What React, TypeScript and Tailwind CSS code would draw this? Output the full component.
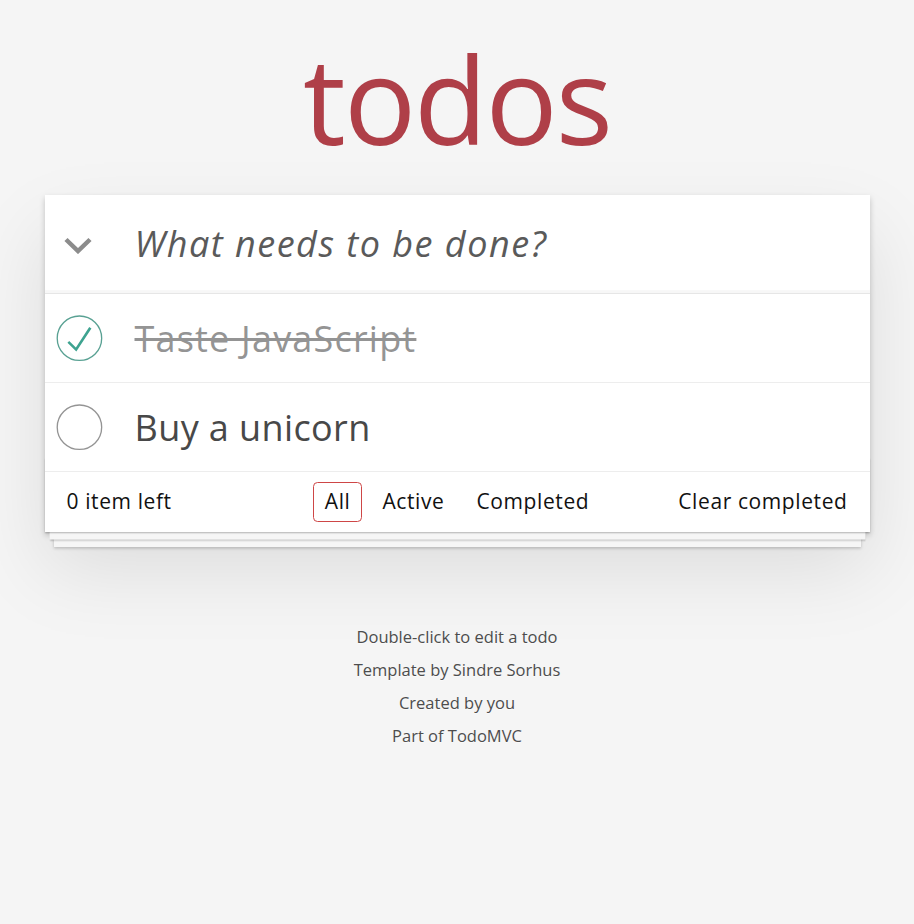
const todos = [
  { id: 1, title: "Taste JavaScript", completed: true },
  { id: 2, title: "Buy a unicorn", completed: false },
];

function Toggle({ checked }: { checked: boolean }) {
  return (
    <svg width="60" height="60" viewBox="-10 -18 100 135" className="shrink-0">
      <circle cx="50" cy="50" r="50" fill="none" stroke={checked ? "#59A193" : "#949494"} strokeWidth="3" />
      {checked ? <path d="M72 25L42 71 27 56l-4 4 20 20 34-52z" fill="#3EA390" /> : null}
    </svg>
  );
}

export default function App() {
  return (
    <div className="min-h-screen bg-[#f5f5f5] font-['Open_Sans',sans-serif] text-[21px] leading-[1.4] text-[#111]">
      <div className="mx-auto w-[825px] pt-[39px]">
        <h1 className="mb-[36px] h-[120px] text-center text-[120px] leading-none font-normal tracking-[-2px] text-[#af3f48]">todos</h1>

        <section className="relative bg-white shadow-[0_3px_6px_0_rgba(0,0,0,0.2),0_37px_75px_0_rgba(0,0,0,0.1)]">
          <header className="flex h-[98px] items-center shadow-[inset_0_-3px_1px_rgba(0,0,0,0.03)]">
            <div className="w-[90px] pl-[19px] pt-[2px]">
              <svg width="28" height="17" viewBox="0 0 28 17">
                <path d="M2 2.5l12 11.5L26 2.5" fill="none" stroke="#8c8c8c" strokeWidth="4.5" />
              </svg>
            </div>
            <span className="text-[36px] leading-[1.4] tracking-[1.5px] italic text-[#5a5a5a]">What needs to be done?</span>
          </header>

          <ul className="border-t border-[#e6e6e6]">
            {todos.map((todo) => (
              <li key={todo.id} className="flex h-[89px] items-center border-b border-[#ededed]">
                <div className="flex w-[90px] items-center">
                  <Toggle checked={todo.completed} />
                </div>
                <label
                  className={
                    todo.completed
                      ? "pt-[2px] text-[36px] leading-[1.2] tracking-[1.2px] text-[#949494] line-through"
                      : "pt-[2px] text-[36px] leading-[1.2] tracking-[0.4px] text-[#484848]"
                  }
                >
                  {todo.title}
                </label>
              </li>
            ))}
          </ul>

          <footer className="relative grid h-[60px] grid-cols-[1fr_auto_1fr] items-center px-[22px] tracking-[0.6px]">
            <div className="pointer-events-none absolute inset-x-0 bottom-0 h-[75px] overflow-hidden shadow-[0_1.5px_1.5px_rgba(0,0,0,0.2),0_12px_0_-4.5px_#f6f6f6,0_13.5px_1.5px_-4.5px_rgba(0,0,0,0.2),0_24px_0_-9px_#f6f6f6,0_25.5px_3px_-9px_rgba(0,0,0,0.2)]" />
            <span className="relative">0 item left</span>
            <ul className="relative flex">
              <li>
                <a className="m-[4.5px] block rounded-[4.5px] border border-[#ce4646] px-[10.5px] py-[4.5px]">All</a>
              </li>
              <li>
                <a className="m-[4.5px] block rounded-[4.5px] border border-transparent px-[10.5px] py-[4.5px]">Active</a>
              </li>
              <li>
                <a className="m-[4.5px] block rounded-[4.5px] border border-transparent px-[10.5px] py-[4.5px]">Completed</a>
              </li>
            </ul>
            <span className="relative text-right">Clear completed</span>
          </footer>
        </section>

        <footer className="mt-[97px] text-center text-[16.5px] leading-none text-[#4d4d4d] [text-shadow:0_1px_0_rgba(255,255,255,0.5)]">
          <p>Double-click to edit a todo</p>
          <p className="mt-[16.5px]">Template by Sindre Sorhus</p>
          <p className="mt-[16.5px]">Created by you</p>
          <p className="mt-[16.5px]">Part of TodoMVC</p>
        </footer>
      </div>
    </div>
  );
}
